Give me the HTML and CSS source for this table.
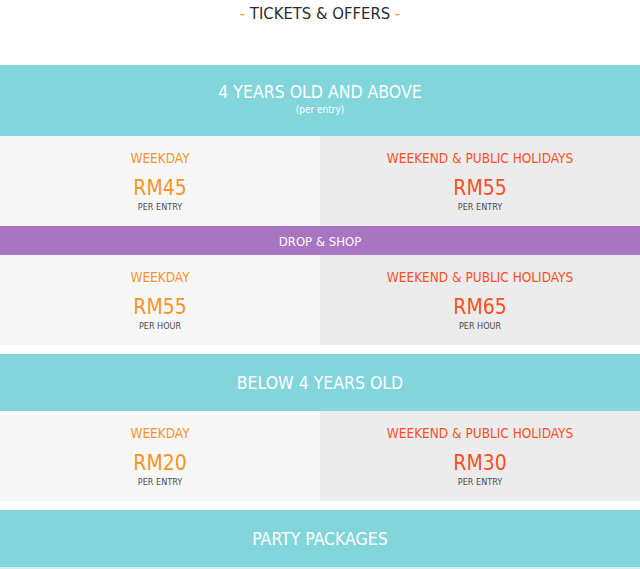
FILE: index.html
```html
<!DOCTYPE html>
<html>
<head>
<meta charset="utf-8">
<link rel="stylesheet" href="styles.css">
</head>
<body>
<div class="page">
  <h1 class="title"><span class="dash">-</span> TICKETS &amp; OFFERS <span class="dash">-</span></h1>

  <section class="band band-tall">
    <div class="band-title">4 YEARS OLD AND ABOVE</div>
    <div class="band-sub">(per entry)</div>
  </section>
  <div class="prices">
    <div class="cell cell-light">
      <div class="label weekday">WEEKDAY</div>
      <div class="price weekday">RM45</div>
      <div class="unit">PER ENTRY</div>
    </div>
    <div class="cell cell-dark">
      <div class="label weekend">WEEKEND &amp; PUBLIC HOLIDAYS</div>
      <div class="price weekend">RM55</div>
      <div class="unit">PER ENTRY</div>
    </div>
  </div>
  <div class="strip">DROP &amp; SHOP</div>
  <div class="prices">
    <div class="cell cell-light">
      <div class="label weekday">WEEKDAY</div>
      <div class="price weekday">RM55</div>
      <div class="unit">PER HOUR</div>
    </div>
    <div class="cell cell-dark">
      <div class="label weekend">WEEKEND &amp; PUBLIC HOLIDAYS</div>
      <div class="price weekend">RM65</div>
      <div class="unit">PER HOUR</div>
    </div>
  </div>

  <section class="band band-mid">
    <div class="band-title">BELOW 4 YEARS OLD</div>
  </section>
  <div class="prices">
    <div class="cell cell-light">
      <div class="label weekday">WEEKDAY</div>
      <div class="price weekday">RM20</div>
      <div class="unit">PER ENTRY</div>
    </div>
    <div class="cell cell-dark">
      <div class="label weekend">WEEKEND &amp; PUBLIC HOLIDAYS</div>
      <div class="price weekend">RM30</div>
      <div class="unit">PER ENTRY</div>
    </div>
  </div>

  <section class="band band-mid band-last">
    <div class="band-title">PARTY PACKAGES</div>
  </section>
</div>
</body>
</html>
```

FILE: styles.css
```css
html, body {
  margin: 0;
  padding: 0;
  background: #ffffff;
}
body {
  font-family: "DejaVu Sans Condensed", "DejaVu Sans", sans-serif;
  font-stretch: condensed;
  overflow: hidden;
}
.page {
  width: 640px;
  display: flex;
  flex-direction: column;
}
.title {
  margin: 0;
  height: 65px;
  padding-top: 3px;
  box-sizing: border-box;
  text-align: center;
  font-weight: normal;
  font-size: 16.5px;
  line-height: 22px;
  color: #2b2b2b;
}
.dash {
  color: #f7931e;
}
.band {
  background: #81d5db;
  color: #ffffff;
  text-align: center;
  display: flex;
  flex-direction: column;
  justify-content: center;
}
.band-tall {
  height: 71px;
  padding-bottom: 4px;
  box-sizing: border-box;
}
.band-mid {
  height: 57px;
  margin-top: 9px;
}
.band-last {
  border-bottom: 2px solid #d6eef0;
}
.band-title {
  font-size: 17.5px;
  line-height: 22px;
}
.band-sub {
  font-size: 10px;
  line-height: 12px;
  margin-top: 1px;
}
.prices {
  display: grid;
  grid-template-columns: 320px 320px;
  height: 90px;
}
.cell {
  text-align: center;
  padding-top: 13px;
  box-sizing: border-box;
}
.cell-light { background: #f7f7f7; }
.cell-dark { background: #ececec; }
.label {
  font-size: 13.5px;
  line-height: 18px;
}
.price {
  font-size: 21px;
  line-height: 26px;
  margin-top: 8px;
}
.unit {
  font-size: 9px;
  line-height: 11px;
  color: #4a4a4a;
  margin-top: 1px;
}
.weekday { color: #f7931e; }
.weekend { color: #f7501e; }
.strip {
  background: #a974c2;
  color: #ffffff;
  height: 29px;
  line-height: 31px;
  text-align: center;
  font-size: 13px;
}
```
